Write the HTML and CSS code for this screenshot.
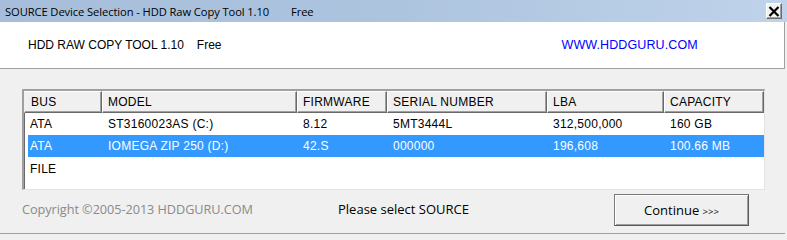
FILE: index.html
```html
<!DOCTYPE html>
<html>
<head>
<meta charset="utf-8">
<link rel="stylesheet" href="styles.css">
</head>
<body>
<div class="window">
  <div class="titlebar">
    <span class="title">SOURCE Device Selection - HDD Raw Copy Tool 1.10</span><span class="title free">Free</span>
    <button class="close" aria-label="Close"><svg width="12" height="11" viewBox="0 0 12 11"><path d="M1.5 1 L10.5 10 M10.5 1 L1.5 10" stroke="#000" stroke-width="2.2" fill="none"/></svg></button>
  </div>
  <div class="banner">
    <span class="app">HDD RAW COPY TOOL 1.10</span><span class="app free2">Free</span>
    <span class="url">WWW.HDDGURU.COM</span>
  </div>
  <div class="main">
    <div class="list">
      <div class="row head">
        <div class="hc">BUS</div>
        <div class="hc">MODEL</div>
        <div class="hc">FIRMWARE</div>
        <div class="hc">SERIAL NUMBER</div>
        <div class="hc">LBA</div>
        <div class="hc">CAPACITY</div>
      </div>
      <div class="row">
        <div class="c">ATA</div>
        <div class="c">ST3160023AS (C:)</div>
        <div class="c">8.12</div>
        <div class="c">5MT3444L</div>
        <div class="c">312,500,000</div>
        <div class="c">160 GB</div>
      </div>
      <div class="row sel">
        <div class="c">ATA</div>
        <div class="c">IOMEGA ZIP 250 (D:)</div>
        <div class="c">42.S</div>
        <div class="c">000000</div>
        <div class="c">196,608</div>
        <div class="c">100.66 MB</div>
      </div>
      <div class="row last">
        <div class="c">FILE</div>
        <div class="c"></div>
        <div class="c"></div>
        <div class="c"></div>
        <div class="c"></div>
        <div class="c"></div>
      </div>
    </div>
    <div class="footer">
      <span class="copy">Copyright ©2005-2013 HDDGURU.COM</span>
      <span class="status">Please select SOURCE</span>
      <button class="continue">Continue <span class="arrows">&gt;&gt;&gt;</span></button>
    </div>
  </div>
</div>
</body>
</html>
```

FILE: styles.css
```css
html, body {
  margin: 0;
  padding: 0;
  background: #f0f0f0;
}
.window {
  width: 787px;
  height: 240px;
  overflow: hidden;
  background: #f0f0f0;
}
.titlebar {
  height: 22px;
  display: flex;
  align-items: center;
  background: linear-gradient(to right, #a6bedb 0%, #adc4df 50%, #bfd3ea 100%);
}
.title {
  font-family: "Open Sans", "Noto Sans", sans-serif;
  font-size: 11.2px;
  color: #000;
  padding-left: 5px;
  white-space: nowrap;
  letter-spacing: -0.1px;
}
.title.free {
  padding-left: 22px;
}
.close {
  margin-left: auto;
  margin-right: 5px;
  width: 16px;
  height: 16px;
  padding: 0;
  display: flex;
  align-items: center;
  justify-content: center;
  background: #f2f2f2;
  border: 1px solid;
  border-color: #ffffff #6a6a6a #6a6a6a #ffffff;
  box-shadow: inset -1px -1px 0 #a0a0a0;
}
.banner {
  height: 46px;
  margin-right: 2px;
  background: #fff;
  border-bottom: 1px solid #a0a0a0;
  border-right: 1px solid #a0a0a0;
  display: flex;
  align-items: center;
  font-family: "Liberation Sans", Arial, sans-serif;
  font-size: 12px;
}
.app {
  color: #000;
  white-space: nowrap;
}
.app:first-child {
  padding-left: 28px;
}
.free2 {
  padding-left: 13px;
}
.url {
  color: #0000ff;
  margin-left: 340px;
  font-size: 12.5px;
  letter-spacing: 0.1px;
  white-space: nowrap;
}
.main {
  padding: 20px 0 0 22px;
  height: 144px;
  border-bottom: 1px solid #a0a0a0;
  margin-right: 2px;
}
.list {
  width: 740px;
  height: 98px;
  border-style: solid;
  border-width: 2px 1px 1px 2px;
  border-color: #a0a0a0 #e3e3e3 #e3e3e3 #a0a0a0;
  box-shadow: inset 1px 1px 0 #696969;
  background: #fff;
  font-family: "Liberation Sans", Arial, sans-serif;
  font-size: 12px;
  letter-spacing: 0.25px;
  color: #000;
}
.row {
  display: grid;
  grid-template-columns: 78px 195px 90px 160px 117px 100px;
  height: 22px;
  align-items: center;
}
.row.head {
  background: #f0f0f0;
}
.hc {
  box-sizing: border-box;
  height: 22px;
  line-height: 20px;
  padding-left: 5px;
  border: 1px solid;
  border-color: #ffffff #696969 #696969 #ffffff;
  box-shadow: inset -1px -1px 0 #a0a0a0;
  white-space: nowrap;
  overflow: hidden;
}
.hc:first-child {
  border-left-color: #f0f0f0;
  padding-left: 6px;
}
.c {
  padding-left: 6px;
  white-space: nowrap;
  line-height: 22px;
}
.row.sel {
  background: #3399ff;
  color: #fff;
  margin-left: 4px;
  grid-template-columns: 74px 195px 90px 160px 117px 100px;
}
.row.sel .c:first-child {
  padding-left: 2px;
}
.row.last {
  margin-top: 1px;
}
.footer {
  display: flex;
  align-items: center;
  height: 38px;
  font-family: "Open Sans", "Noto Sans", sans-serif;
  font-size: 13px;
}
.copy {
  color: #8a8a8a;
  white-space: nowrap;
  width: 316px;
  font-size: 12.7px;
  letter-spacing: -0.05px;
}
.status {
  color: #000;
  white-space: nowrap;
  width: 276px;
}
.continue {
  width: 135px;
  height: 32px;
  margin-top: 2px;
  background: #f0f0f0;
  border: 1px solid;
  border-color: #7a7a7a #5a5a5a #5a5a5a #7a7a7a;
  box-shadow: inset 1px 1px 0 #ffffff, inset -1px -1px 0 #a0a0a0;
  font-family: "Open Sans", "Noto Sans", sans-serif;
  font-size: 13px;
  color: #000;
  padding: 0;
}
.arrows {
  font-size: 9.5px;
}
```
